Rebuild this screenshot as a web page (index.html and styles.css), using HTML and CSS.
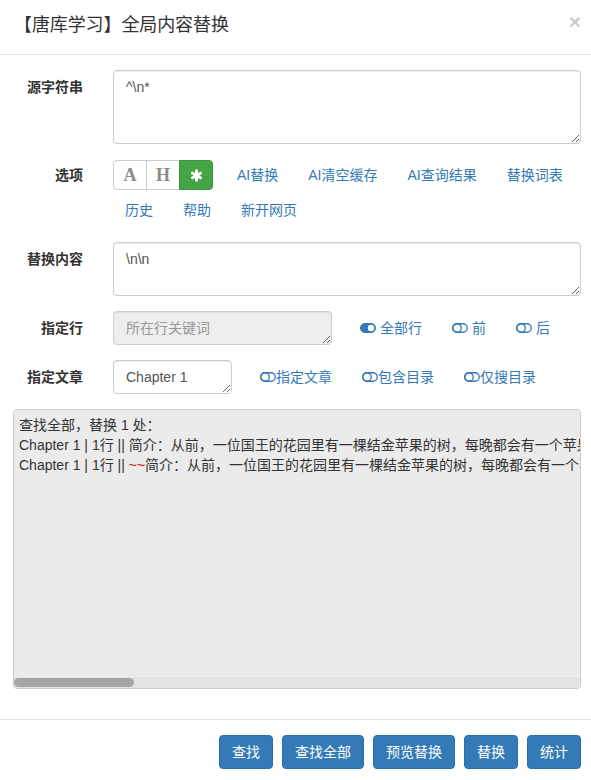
FILE: index.html
```html
<!DOCTYPE html>
<html lang="zh-CN">
<head>
<meta charset="utf-8">
<title>全局内容替换</title>
<link rel="stylesheet" href="styles.css">
</head>
<body>
<div class="modal">
  <div class="modal-header">
    <h4 class="title">【唐库学习】全局内容替换</h4>
    <button class="close" type="button">×</button>
  </div>
  <div class="modal-body">
    <div class="form-row row-src">
      <label class="lbl">源字符串</label>
      <textarea class="ctl ta-src">^\n*</textarea>
    </div>
    <div class="form-row row-opts">
      <label class="lbl lbl-opts">选项</label>
      <div class="opts">
        <div class="btn-group">
          <button class="gbtn serif" type="button">A</button>
          <button class="gbtn serif" type="button">H</button>
          <button class="gbtn active" type="button"><svg width="13" height="13" viewBox="0 0 14 14"><g stroke="#fff" stroke-width="3.2" stroke-linecap="round"><line x1="7" y1="2" x2="7" y2="12"/><line x1="2.7" y1="4.5" x2="11.3" y2="9.5"/><line x1="2.7" y1="9.5" x2="11.3" y2="4.5"/></g></svg></button>
        </div>
        <a class="lnk">AI替换</a>
        <a class="lnk">AI清空缓存</a>
        <a class="lnk">AI查询结果</a>
        <a class="lnk">替换词表</a>
        <a class="lnk">历史</a>
        <a class="lnk">帮助</a>
        <a class="lnk">新开网页</a>
      </div>
    </div>
    <div class="form-row row-rep">
      <label class="lbl">替换内容</label>
      <textarea class="ctl ta-rep">\n\n</textarea>
    </div>
    <div class="form-row row-line">
      <label class="lbl">指定行</label>
      <div class="tg-row">
        <textarea class="ctl ta-line" disabled placeholder="所在行关键词"></textarea>
        <a class="tg"><svg width="16" height="10" viewBox="0 0 16 10"><rect x="0.5" y="0.5" width="15" height="9" rx="4.5" fill="#337ab7" stroke="#337ab7"/><circle cx="11" cy="5" r="3.2" fill="#fff"/></svg>全部行</a>
        <a class="tg"><svg width="16" height="10" viewBox="0 0 16 10"><rect x="0.75" y="0.75" width="14.5" height="8.5" rx="4.25" fill="none" stroke="#337ab7" stroke-width="1.3"/><circle cx="5" cy="5" r="4.25" fill="none" stroke="#337ab7" stroke-width="1.3"/></svg>前</a>
        <a class="tg"><svg width="16" height="10" viewBox="0 0 16 10"><rect x="0.75" y="0.75" width="14.5" height="8.5" rx="4.25" fill="none" stroke="#337ab7" stroke-width="1.3"/><circle cx="5" cy="5" r="4.25" fill="none" stroke="#337ab7" stroke-width="1.3"/></svg>后</a>
      </div>
    </div>
    <div class="form-row row-art">
      <label class="lbl">指定文章</label>
      <div class="tg-row">
        <textarea class="ctl ta-art">Chapter 1</textarea>
        <a class="tg tight"><svg width="16" height="10" viewBox="0 0 16 10"><rect x="0.75" y="0.75" width="14.5" height="8.5" rx="4.25" fill="none" stroke="#337ab7" stroke-width="1.3"/><circle cx="5" cy="5" r="4.25" fill="none" stroke="#337ab7" stroke-width="1.3"/></svg>指定文章</a>
        <a class="tg tight"><svg width="16" height="10" viewBox="0 0 16 10"><rect x="0.75" y="0.75" width="14.5" height="8.5" rx="4.25" fill="none" stroke="#337ab7" stroke-width="1.3"/><circle cx="5" cy="5" r="4.25" fill="none" stroke="#337ab7" stroke-width="1.3"/></svg>包含目录</a>
        <a class="tg tight"><svg width="16" height="10" viewBox="0 0 16 10"><rect x="0.75" y="0.75" width="14.5" height="8.5" rx="4.25" fill="none" stroke="#337ab7" stroke-width="1.3"/><circle cx="5" cy="5" r="4.25" fill="none" stroke="#337ab7" stroke-width="1.3"/></svg>仅搜目录</a>
      </div>
    </div>
    <div class="result">
      <div class="result-view">
        <div class="rline">查找全部，替换 1 处：</div>
        <div class="rline">Chapter 1 | 1行 || 简介：从前，一位国王的花园里有一棵结金苹果的树，每晚都会有一个苹果被偷走。</div>
        <div class="rline">Chapter 1 | 1行 || <span class="mark">~~</span>简介：从前，一位国王的花园里有一棵结金苹果的树，每晚都会有一个苹果被偷走。</div>
      </div>
      <div class="hscroll"><div class="thumb"></div></div>
    </div>
  </div>
  <div class="modal-footer">
    <button class="btn" type="button">查找</button>
    <button class="btn" type="button">查找全部</button>
    <button class="btn" type="button">预览替换</button>
    <button class="btn" type="button">替换</button>
    <button class="btn" type="button">统计</button>
  </div>
</div>
</body>
</html>
```
FILE: styles.css
```css
* { box-sizing: border-box; }
html, body { margin: 0; padding: 0; background: #fff; }
body {
  font-family: "Liberation Sans", "Noto Sans CJK SC", sans-serif;
  font-size: 14px;
  line-height: 20px;
  color: #333;
  width: 591px;
  height: 780px;
  overflow: hidden;
}
.modal { width: 591px; }
.modal-header {
  height: 55px;
  border-bottom: 1px solid #e5e5e5;
  padding: 0 10px 0 14px;
  display: flex;
  align-items: center;
  justify-content: space-between;
}
.title {
  margin: 0;
  font-size: 18px;
  font-weight: 400;
  line-height: 26px;
  color: #333;
  padding-bottom: 4px;
  letter-spacing: -0.1px;
}
.close {
  border: 0;
  background: none;
  padding: 0;
  font-family: "Liberation Sans", sans-serif;
  font-size: 21px;
  font-weight: bold;
  line-height: 21px;
  color: #000;
  opacity: .2;
  align-self: flex-start;
  margin-top: 11px;
}
.modal-body { padding: 15px 10px 30px 13px; }
.form-row {
  display: grid;
  grid-template-columns: 70px 1fr;
  column-gap: 30px;
}
.lbl {
  text-align: right;
  font-weight: bold;
  padding-top: 7px;
  line-height: 20px;
  color: #333;
}
.lbl-opts { padding-top: 5px; }
.ctl {
  display: block;
  width: 100%;
  border: 1px solid #ccc;
  border-radius: 4px;
  padding: 6px 12px;
  font-family: "Liberation Sans", "Noto Sans CJK SC", sans-serif;
  font-size: 14px;
  line-height: 20px;
  color: #555;
  background: #fff;
  box-shadow: inset 0 1px 1px rgba(0,0,0,.075);
  margin: 0;
}
.ta-src { height: 74px; }
.row-opts { margin-top: 16px; }
.opts {
  display: flex;
  flex-wrap: wrap;
  align-items: center;
  row-gap: 5px;
  column-gap: 6px;
}
.btn-group { display: flex; margin-right: 6px; height: 30px; }
.gbtn {
  width: 34px;
  height: 30px;
  border: 1px solid #ccc;
  background: #fff;
  padding: 0;
  margin: 0 0 0 -1px;
  display: flex;
  align-items: center;
  justify-content: center;
  color: #8c8c8c;
}
.gbtn:first-child { margin-left: 0; border-radius: 4px 0 0 4px; }
.gbtn:last-child { border-radius: 0 4px 4px 0; }
.serif {
  font-family: "Liberation Serif", serif;
  font-size: 18px;
  font-weight: bold;
}
.gbtn.active { background: #44a544; border-color: #3d943d; }
.lnk {
  color: #337ab7;
  text-decoration: none;
  padding: 0 12px;
  height: 30px;
  line-height: 30px;
}
.row-rep { margin-top: 17px; }
.ta-rep { height: 54px; }
.row-line, .row-art { margin-top: 15px; }
.tg-row { display: flex; align-items: center; gap: 30px; }
.tg-row .ctl { flex: none; height: 34px; resize: vertical; margin-right: -2px; }
.ta-line { width: 219px; background: #eee; }
.ta-line::placeholder { color: #999; }
.ta-art { width: 119px; }
.tg {
  display: inline-flex;
  align-items: center;
  gap: 4px;
  color: #337ab7;
  text-decoration: none;
}
.tg.tight { gap: 0; }
.result {
  margin-top: 15px;
  height: 280px;
  border: 1px solid #ccc;
  border-radius: 4px;
  background: #ebebeb;
  display: flex;
  flex-direction: column;
  overflow: hidden;
}
.result-view {
  flex: 1;
  overflow: hidden;
  padding: 5px 5px;
  white-space: nowrap;
  color: #333;
}
.rline { height: 20px; }
.mark { color: #d00; }
.hscroll {
  flex: none;
  height: 12px;
  background: #e3e3e3;
  border-top: 1px solid #f0f0f0;
  padding: 1px 0 1px 0;
}
.thumb {
  width: 120px;
  height: 9px;
  border-radius: 5px;
  background: #a6a6a6;
}
.modal-footer {
  border-top: 1px solid #e5e5e5;
  padding: 15px 10px 15px 13px;
  display: flex;
  justify-content: flex-end;
  gap: 9px;
}
.btn {
  font-family: "Liberation Sans", "Noto Sans CJK SC", sans-serif;
  font-size: 14px;
  line-height: 20px;
  padding: 6px 12px;
  border: 1px solid #2e6da4;
  border-radius: 4px;
  background: #337ab7;
  color: #fff;
  margin: 0;
}
```
